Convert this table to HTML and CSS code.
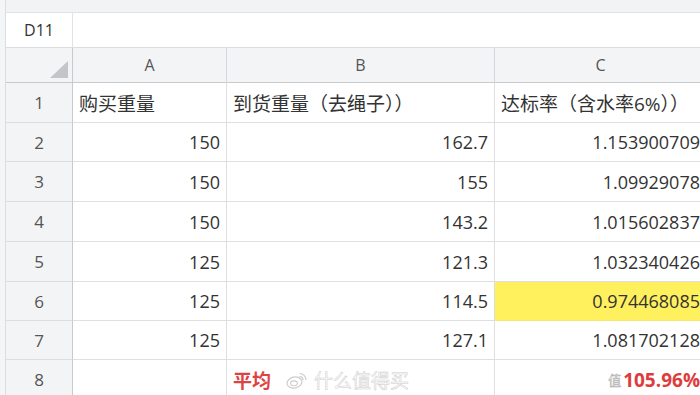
FILE: index.html
```html
<!DOCTYPE html>
<html lang="zh-CN">
<head>
<meta charset="utf-8">
<title>Sheet</title>
<link rel="stylesheet" href="styles.css">
</head>
<body>
<div class="app">
  <div class="edge"></div>
  <div class="main">
    <div class="topbar"></div>
    <div class="fbar">
      <div class="namebox">D11</div>
      <div class="formula"></div>
    </div>
    <div class="sheet">
      <div class="corner"><svg width="18" height="17" viewBox="0 0 18 17"><polygon points="18,0 18,17 0,17" fill="#c3c5c8"/></svg></div>
      <div class="colh">A</div>
      <div class="colh">B</div>
      <div class="colh">C</div>

      <div class="rowh">1</div>
      <div class="cell zh">购买重量</div>
      <div class="cell zh">到货重量（去绳子））</div>
      <div class="cell zh">达标率（含水率6%））</div>

      <div class="rowh">2</div>
      <div class="cell num">150</div>
      <div class="cell num">162.7</div>
      <div class="cell num">1.153900709</div>

      <div class="rowh">3</div>
      <div class="cell num">150</div>
      <div class="cell num">155</div>
      <div class="cell num">1.09929078</div>

      <div class="rowh">4</div>
      <div class="cell num">150</div>
      <div class="cell num">143.2</div>
      <div class="cell num">1.015602837</div>

      <div class="rowh">5</div>
      <div class="cell num">125</div>
      <div class="cell num">121.3</div>
      <div class="cell num">1.032340426</div>

      <div class="rowh">6</div>
      <div class="cell num">125</div>
      <div class="cell num">114.5</div>
      <div class="cell num hl">0.974468085</div>

      <div class="rowh">7</div>
      <div class="cell num">125</div>
      <div class="cell num">127.1</div>
      <div class="cell num">1.081702128</div>

      <div class="rowh">8</div>
      <div class="cell"></div>
      <div class="cell zh">
        <span class="avg">平均</span>
        <span class="wm">
          <svg class="wb" width="22" height="18" viewBox="0 0 22 18">
            <ellipse cx="8.5" cy="11.5" rx="7.5" ry="5.5" transform="rotate(-12 8.5 11.5)" fill="none" stroke="#cdcdcd" stroke-width="1.2"/>
            <ellipse cx="8" cy="12.3" rx="3.4" ry="2.4" fill="none" stroke="#cdcdcd" stroke-width="1.1"/>
            <path d="M13.5 2.5 a6.5 6.5 0 0 1 6.5 6.5" fill="none" stroke="#cdcdcd" stroke-width="1.2"/>
            <path d="M13.5 5.5 a3.5 3.5 0 0 1 3.5 3.5" fill="none" stroke="#cdcdcd" stroke-width="1.2"/>
          </svg>
          <span class="wmtext">什么值得买</span>
        </span>
      </div>
      <div class="cell num total">
        <span class="wm2">值</span>
        <span class="red">105.96%</span>
      </div>
    </div>
  </div>
</div>
</body>
</html>
```
FILE: styles.css
```css
html, body {
  margin: 0;
  padding: 0;
  overflow: hidden;
  background: #ffffff;
}
.app {
  display: flex;
  width: 720px;
  height: 395px;
  overflow: hidden;
  font-family: "Open Sans", "Noto Sans CJK SC", sans-serif;
  color: #333333;
}
.edge {
  width: 6px;
  box-sizing: border-box;
  background: #f4f5f7;
  border-right: 1px solid #dcdde0;
  flex: none;
}
.main {
  flex: 1;
  display: flex;
  flex-direction: column;
}
.topbar {
  flex: none;
  height: 13px;
  box-sizing: border-box;
  background: #f2f3f5;
  border-bottom: 1px solid #e1e2e4;
}
.fbar {
  flex: none;
  height: 35px;
  box-sizing: border-box;
  display: flex;
  border-bottom: 1px solid #dcdde0;
  background: #ffffff;
}
.namebox {
  width: 67px;
  box-sizing: border-box;
  border-right: 1px solid #e2e3e5;
  display: flex;
  align-items: center;
  justify-content: center;
  font-size: 16px;
  color: #333;
}
.formula {
  flex: 1;
}
.sheet {
  flex: none;
  display: grid;
  grid-template-columns: 67px 154px 268px 212px;
  grid-template-rows: 35px 40px 39px 40px 40px 40px 39px 39px 40px;
}
.sheet > div {
  box-sizing: border-box;
  border-right: 1px solid #dedfe1;
  border-bottom: 1px solid #dedfe1;
  display: flex;
  align-items: center;
  overflow: hidden;
  white-space: nowrap;
}
.corner {
  background: #f3f4f6;
  justify-content: flex-end;
  align-items: flex-end !important;
  padding: 0 4px 4px 0;
  border-right-color: #c9cacd !important;
  border-bottom-color: #c9cacd !important;
}
.corner svg {
  display: block;
}
.colh {
  background: #f3f4f6;
  justify-content: center;
  font-size: 16px;
  color: #555555;
  border-right-color: #d6d7da !important;
  border-bottom-color: #c9cacd !important;
}
.rowh {
  background: #f3f4f6;
  justify-content: center;
  font-size: 17px;
  color: #555555;
  border-right-color: #c9cacd !important;
  border-bottom-color: #dcdde0 !important;
}
.cell {
  padding: 0 6px;
  font-size: 18px;
  background: #ffffff;
}
.zh {
  font-size: 19px;
}
.num {
  justify-content: flex-end;
}
.hl {
  background: #fff15e;
  border-bottom-color: #f5e770 !important;
}
.avg {
  color: #dc4444;
  font-weight: bold;
  font-size: 19px;
}
.wm {
  display: inline-flex;
  align-items: center;
  margin-left: 15px;
  gap: 6px;
}
.wb {
  display: block;
}
.wmtext {
  color: #ffffff;
  -webkit-text-stroke: 0.5px #cbcbcb;
  font-size: 19px;
}
.red {
  color: #de3c3c;
  font-weight: bold;
  font-size: 19px;
}
.wm2 {
  font-size: 13px;
  color: #ffffff;
  -webkit-text-stroke: 0.6px #b0b0b0;
  margin-right: 2px;
}
```
